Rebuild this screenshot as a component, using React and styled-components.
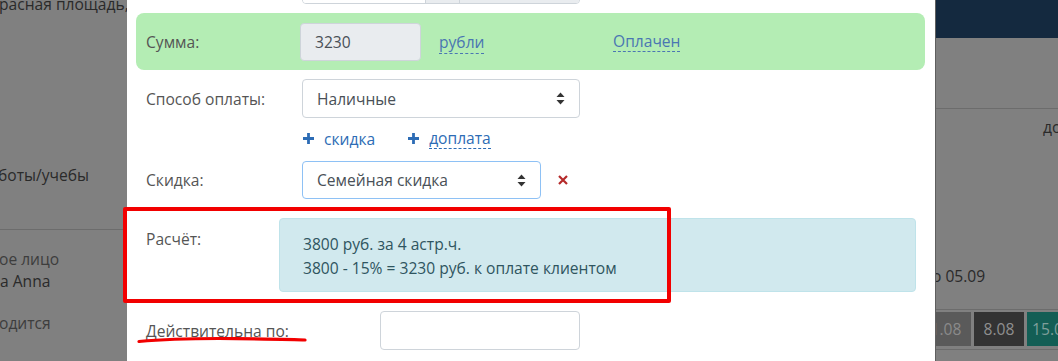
import React from "react"
import styled, { createGlobalStyle } from "styled-components"

const GlobalStyle = createGlobalStyle`
  html, body {
    margin: 0;
    padding: 0;
    background: #808080;
    font-family: "Open Sans", "Liberation Sans", sans-serif;
    font-size: 15.6px;
  }
`

const Page = styled.div`
  position: relative;
  display: flex;
  width: 1058px;
  height: 361px;
  overflow: hidden;
  background: #808080;
`

const SideStrip = styled.div`
  display: flex;
  flex-direction: column;
  width: ${p => p.$width}px;
  flex-shrink: 0;
  overflow: hidden;
  white-space: nowrap;
  border-left: ${p => (p.$edge ? "1px solid #5f5f5f" : "none")};
`

const DimText = styled.div`
  margin-top: ${p => p.$mt || 0}px;
  margin-left: ${p => p.$ml || 0}px;
  line-height: 20px;
  height: 20px;
  color: ${p => p.$light ? "#3d3d3d" : "#2a2a2a"};
  flex-shrink: 0;
`

const DimLine = styled.div`
  margin-top: ${p => p.$mt}px;
  height: 1px;
  background: #6c6c6c;
  flex-shrink: 0;
`

const NavyBand = styled.div`
  height: 38px;
  background: #14293f;
  flex-shrink: 0;
`

const DateBoxes = styled.div`
  display: flex;
  gap: 3px;
  margin-top: 2px;
  margin-left: -15px;
  height: 34px;
  flex-shrink: 0;
`

const DateBox = styled.div`
  width: 50px;
  flex-shrink: 0;
  display: flex;
  align-items: center;
  justify-content: center;
  background: ${p => p.$bg};
  color: ${p => p.$fg};
`

const Modal = styled.div`
  width: 808px;
  flex-shrink: 0;
  background: #fff;
  padding: 0 10px 0 9px;
  box-sizing: border-box;
  display: flex;
  flex-direction: column;
`

const TopStub = styled.div`
  height: 4px;
  overflow: hidden;
  display: flex;
  align-items: flex-end;
  padding-left: 166px;
`

const InputGroup = styled.div`
  display: flex;
  width: 278px;
  height: 38px;
  flex-shrink: 0;
  border: 1px solid #ced4da;
  border-radius: 4px;
  box-sizing: border-box;
  overflow: hidden;
`

const GroupPart = styled.div`
  width: ${p => p.$w ? `${p.$w}px` : "auto"};
  flex: ${p => p.$w ? "none" : 1};
  background: ${p => p.$gray ? "#e9ecef" : "#fff"};
  border-left: ${p => p.$divider ? "1px solid #ced4da" : "none"};
`

const SumPanel = styled.div`
  margin-top: 9px;
  height: 57px;
  border-radius: 8px;
  background: #b4edb4;
  display: flex;
  align-items: center;
  padding-left: 10px;
`

const Row = styled.div`
  display: flex;
  align-items: ${p => p.$top ? "flex-start" : "center"};
  margin-top: ${p => p.$mt}px;
  padding-left: ${p => p.$pl ?? 10}px;
`

const Label = styled.div`
  width: ${p => p.$w}px;
  flex-shrink: 0;
  color: #555;
  line-height: 22px;
  padding-top: ${p => p.$pt || 0}px;
`

const Field = styled.div`
  width: ${p => p.$w}px;
  height: ${p => p.$h || 38}px;
  box-sizing: border-box;
  display: flex;
  align-items: center;
  justify-content: space-between;
  padding: 0 14px 0 14px;
  border: 1px solid ${p => p.$focus ? "#8ec1f5" : "#ced4da"};
  border-radius: 4px;
  background: ${p => p.$readonly ? "#e9ecef" : "#fff"};
  color: #495057;
  flex-shrink: 0;
`

const DashedLink = styled.span`
  color: ${p => p.$muted ? "#4a76b2" : "#2d6cb5"};
  border-bottom: ${p => p.$plain ? "none" : `1px dashed ${p.$muted ? "#4a76b2" : "#2d6cb5"}`};
  line-height: 20px;
  cursor: pointer;
`

const LinkSlot = styled.div`
  width: ${p => p.$w}px;
  flex-shrink: 0;
`

const AddLink = styled.div`
  display: flex;
  align-items: center;
  gap: 9px;
  margin-left: ${p => p.$ml || 0}px;
`

const RemoveButton = styled.div`
  margin-left: 17px;
  display: flex;
  align-items: center;
`

const InfoBox = styled.div`
  width: 637px;
  height: 74px;
  box-sizing: border-box;
  padding: 13px 23px 0;
  background: #d1e9ee;
  border: 1px solid #bfe3ea;
  border-radius: 4px;
  color: #2f5560;
  line-height: 24px;
`

const Annotation = styled.div`
  position: absolute;
  left: 123px;
  top: 207px;
  width: 548px;
  height: 96px;
  box-sizing: border-box;
  border: 4px solid #f20000;
  border-radius: 2px;
  pointer-events: none;
`

const Scribble = styled.svg`
  position: absolute;
  left: 136px;
  top: 334px;
  pointer-events: none;
`

const SortArrows = () => (
  <svg width="9" height="13" viewBox="0 0 9 13">
    <path d="M4.5 0.5 L8.5 5 L0.5 5 Z" fill="#333" />
    <path d="M4.5 12.5 L8.5 8 L0.5 8 Z" fill="#333" />
  </svg>
)

const PlusIcon = () => (
  <svg width="13" height="13" viewBox="0 0 13 13">
    <path d="M6.5 1 V12 M1 6.5 H12" stroke="#2d6cb5" strokeWidth="2.8" />
  </svg>
)

const CrossIcon = () => (
  <svg width="10" height="10" viewBox="0 0 10 10">
    <path d="M1 1 L9 9 M9 1 L1 9" stroke="#b52a2a" strokeWidth="2.2" />
  </svg>
)

const App = () => {
  return (
    <Page>
      <GlobalStyle />
      <SideStrip $width={127}>
        <DimText $mt={-6} $ml={-1}>расная площадь, д</DimText>
        <DimText $mt={151} $ml={-2}>боты/учебы</DimText>
        <DimLine $mt={44} />
        <DimText $mt={19} $ml={-1} $light>ое лицо</DimText>
        <DimText $mt={2}>а Anna</DimText>
        <DimText $mt={22} $ml={-1} $light>одится</DimText>
      </SideStrip>

      <Modal>
        <TopStub>
          <InputGroup>
            <GroupPart $w={122} />
            <GroupPart $w={33} $gray $divider />
            <GroupPart $gray $divider />
          </InputGroup>
        </TopStub>

        <SumPanel>
          <Label $w={154}>Сумма:</Label>
          <Field $w={121} $readonly>3230</Field>
          <LinkSlot $w={18} />
          <LinkSlot $w={174}>
            <DashedLink $muted>рубли</DashedLink>
          </LinkSlot>
          <DashedLink $muted>Оплачен</DashedLink>
        </SumPanel>

        <Row $mt={9}>
          <Label $w={156}>Способ оплаты:</Label>
          <Field $w={278} $h={39}>
            Наличные
            <SortArrows />
          </Field>
        </Row>

        <Row $mt={10} $pl={166}>
          <AddLink>
            <PlusIcon />
            <DashedLink $plain>скидка</DashedLink>
          </AddLink>
          <AddLink $ml={32}>
            <PlusIcon />
            <DashedLink>доплата</DashedLink>
          </AddLink>
        </Row>

        <Row $mt={12}>
          <Label $w={156}>Скидка:</Label>
          <Field $w={239} $focus>
            Семейная скидка
            <SortArrows />
          </Field>
          <RemoveButton>
            <CrossIcon />
          </RemoveButton>
        </Row>

        <Row $mt={19} $top>
          <Label $w={133} $pt={10}>Расчёт:</Label>
          <InfoBox>
            <div>3800 руб. за 4 астр.ч.</div>
            <div>3800 - 15% = 3230 руб. к оплате клиентом</div>
          </InfoBox>
        </Row>

        <Row $mt={19}>
          <Label $w={234}>Действительна по:</Label>
          <Field $w={200} $h={39} />
        </Row>
      </Modal>

      <SideStrip $width={123} $edge>
        <NavyBand />
        <DimLine $mt={70} />
        <DimText $mt={8} $ml={107}>до</DimText>
        <DimText $mt={129} $ml={-4}>о 05.09</DimText>
        <DimLine $mt={23} />
        <DateBoxes>
          <DateBox $bg="#5a5a5a" $fg="#8a8a8a">1.08</DateBox>
          <DateBox $bg="#333" $fg="#8f8f8f">8.08</DateBox>
          <DateBox $bg="#135e55" $fg="#7f9f9b">15.08</DateBox>
        </DateBoxes>
        <DimLine $mt={3} />
      </SideStrip>

      <Annotation />
      <Scribble width="175" height="12" viewBox="0 0 175 12">
        <path d="M3 7.5 Q 40 4 100 4.6 T 169 6" stroke="#f20000" strokeWidth="3.2" fill="none" strokeLinecap="round" />
      </Scribble>
    </Page>
  )
}

export default App
